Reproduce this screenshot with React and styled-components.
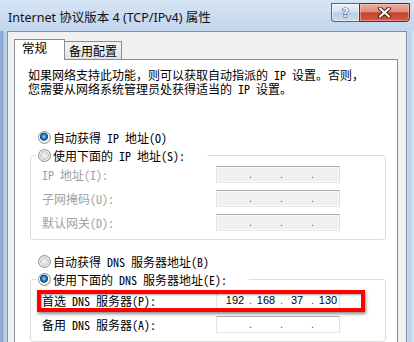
import styled, { createGlobalStyle } from "styled-components";

const GlobalStyle = createGlobalStyle`
  html, body {
    margin: 0;
    padding: 0;
  }
  body {
    background: #cfe0f3;
    overflow: hidden;
  }
`;

const Window = styled.div`
  width: 414px;
  height: 342px;
  display: flex;
  flex-direction: column;
  overflow: hidden;
  background: linear-gradient(#d6e4f4, #c1d5ed 31px, #c4d8ef);
  font-family: "Noto Sans Mono CJK SC", "Noto Sans CJK SC", monospace;
  font-size: 12px;
  color: #000;
`;

const TitleBar = styled.div`
  height: 31px;
  flex: none;
  display: flex;
  justify-content: space-between;
  align-items: flex-start;
  padding-left: 8px;
`;

const Title = styled.div`
  padding-top: 9px;
  line-height: 18px;
  font-family: "Noto Sans", "Noto Sans CJK SC", sans-serif;
  font-size: 12.5px;
  color: #111;
  white-space: nowrap;
`;

const Caption = styled.div`
  display: flex;
  margin-top: 3px;
  margin-right: 4px;
`;

const HelpButton = styled.div`
  width: 28px;
  height: 19px;
  box-sizing: border-box;
  border: 1px solid #4f6583;
  border-right: none;
  border-radius: 0 0 0 4px;
  background: linear-gradient(#eaf0f7 0%, #d6e1ef 45%, #bccde3 52%, #cbdaec 100%);
  box-shadow: inset 0 0 0 1px rgba(255, 255, 255, 0.55);
  display: flex;
  align-items: center;
  justify-content: center;
  font-family: "DejaVu Sans", sans-serif;
  font-weight: bold;
  font-size: 13px;
  color: #eef1f5;
  -webkit-text-stroke: 1px #43536a;
  paint-order: stroke fill;
`;

const CloseButton = styled.div`
  width: 51px;
  height: 19px;
  box-sizing: border-box;
  border: 1px solid #5e2a22;
  border-radius: 0 0 4px 0;
  background: linear-gradient(#eaada0 0%, #dc8d7b 45%, #c5442c 52%, #d25a40 100%);
  box-shadow: inset 0 0 0 1px rgba(255, 220, 210, 0.45);
  display: flex;
  align-items: center;
  justify-content: center;
`;

const Body = styled.div`
  flex: 1;
  display: flex;
  min-height: 0;
`;

const Frame = styled.div`
  width: 7px;
  flex: none;
  background: ${(p) =>
    p.$side === "left"
      ? "linear-gradient(90deg, #9db5da 0, #7f9bc8 2px, #b4cbe8 4px, #c4d8ef 7px)"
      : "linear-gradient(90deg, #c8dcf2 0, #b6d2f2 3px, #d6e6f8 6px, #c9ddf3 7px)"};
`;

const Client = styled.div`
  flex: 1;
  display: flex;
  flex-direction: column;
  background: #f0f0f0;
  border: 1px solid #868e99;
  border-bottom: none;
  padding: 7px 8px 0 6px;
  min-width: 0;
`;

const TabRow = styled.div`
  height: 20px;
  display: flex;
  align-items: flex-end;
  position: relative;
  z-index: 1;
`;

const Tab = styled.div`
  box-sizing: border-box;
  border: 1px solid #898c95;
  border-bottom: none;
  font-family: "Noto Sans CJK SC", sans-serif;
  font-size: 12px;
  white-space: nowrap;
  ${(p) =>
    p.$active
      ? `
    width: 51px;
    height: 21px;
    margin-bottom: -1px;
    background: #fff;
    padding-left: 7px;
    line-height: 16px;
    font-size: 12.5px;
  `
      : `
    width: 57px;
    height: 18px;
    background: linear-gradient(#f3f3f3, #e4e4e4);
    text-align: center;
    line-height: 17px;
    border-left: none;
  `}
`;

const Panel = styled.div`
  flex: 1;
  background: #fff;
  border: 1px solid #898c95;
  border-bottom: none;
  padding: 8px 0 0 13px;
`;

const Intro = styled.p`
  margin: 0;
  line-height: 14px;
  white-space: nowrap;
`;

const RadioRow = styled.div`
  height: 18px;
  display: flex;
  align-items: center;
  gap: 2px;
  margin-left: 10px;
  margin-top: ${(p) => p.$gap || 0}px;
  white-space: nowrap;
`;

const Radio = styled.span`
  width: 13px;
  height: 13px;
  flex: none;
  box-sizing: border-box;
  border-radius: 50%;
  border: 1px solid #8f9192;
  background: ${(p) =>
    p.$checked
      ? "radial-gradient(circle at 45% 42%, #b4e0ff 0, #3e8fd8 1.6px, #134f94 3.4px, #1b4f88 3.8px, #fdfdfd 4.4px, #e9e9e9 5.6px)"
      : "radial-gradient(circle at 50% 50%, #f7f7f7 0, #d9d9d9 3.6px, #c4c4c4 4px, #f4f4f4 4.6px, #dedede 5.6px)"};
`;

const Group = styled.fieldset`
  width: 356px;
  box-sizing: border-box;
  margin: 0 0 0 2px;
  padding: ${(p) => p.$top || 2}px 0 8px 11px;
  border: 1px solid #d5dfe5;
  border-radius: 3px;
  min-width: 0;
  display: flex;
  flex-direction: column;
  gap: 7px;
`;

const Legend = styled.legend`
  box-sizing: border-box;
  width: ${(p) => p.$width}px;
  height: 18px;
  margin-left: -6px;
  padding: 0 0 0 2px;
  display: flex;
  align-items: center;
  gap: 2px;
  white-space: nowrap;
`;

const FieldRow = styled.div`
  position: relative;
  display: grid;
  grid-template-columns: 174px 124px;
  height: 17px;

  /* red annotation drawn over the first DNS row */
  ${(p) =>
    p.$marked &&
    `
    &::after {
      content: "";
      position: absolute;
      left: -5px;
      top: -2px;
      width: 328px;
      height: 22px;
      box-sizing: border-box;
      border: 4px solid #ff0000;
      box-shadow: 1px 2px 3px rgba(0, 0, 0, 0.45), inset 1px 1px 2px rgba(0, 0, 0, 0.35);
      pointer-events: none;
    }
  `}
`;

const Label = styled.span`
  line-height: 17px;
  color: ${(p) => (p.$disabled ? "#a2a2a2" : "#000")};
  white-space: nowrap;
`;

const IpBox = styled.div`
  box-sizing: border-box;
  height: 17px;
  display: flex;
  padding-left: 4px;
  overflow: hidden;
  border: 1px solid;
  border-color: #abadb3 #dbdfe6 #e3e9ef #e2e3ea;
  background: ${(p) => (p.$disabled ? "#f0f0f0" : "#fff")};
  box-shadow: inset 0 0 0 1px ${(p) => (p.$disabled ? "#f9f9f9" : "#fff")};
  font-family: "Liberation Sans", sans-serif;
  font-size: 11px;
  line-height: 15px;
  color: #000;
`;

const Octet = styled.span`
  width: 28px;
  flex: none;
  text-align: center;
`;

const Dot = styled.span`
  width: 3px;
  flex: none;
  text-align: center;
  color: #555;
`;

const closeIcon = (
  <svg width="15" height="11" viewBox="0 0 15 11">
    <path d="M3 1.5 L12 9.5 M12 1.5 L3 9.5" stroke="#3a1a14" strokeWidth="4" strokeLinecap="round" />
    <path d="M3 1.5 L12 9.5 M12 1.5 L3 9.5" stroke="#fff" strokeWidth="2.2" strokeLinecap="round" />
  </svg>
);

function IpField({ parts = ["", "", "", ""], disabled }) {
  return (
    <IpBox $disabled={disabled}>
      <Octet>{parts[0]}</Octet>
      <Dot>.</Dot>
      <Octet>{parts[1]}</Octet>
      <Dot>.</Dot>
      <Octet>{parts[2]}</Octet>
      <Dot>.</Dot>
      <Octet>{parts[3]}</Octet>
    </IpBox>
  );
}

const ipRows = ["IP 地址(I):", "子网掩码(U):", "默认网关(D):"];

export default function App() {
  return (
    <>
      <GlobalStyle />
      <Window>
        <TitleBar>
          <Title>Internet 协议版本 4 (TCP/IPv4) 属性</Title>
          <Caption>
            <HelpButton>?</HelpButton>
            <CloseButton>{closeIcon}</CloseButton>
          </Caption>
        </TitleBar>
        <Body>
          <Frame $side="left" />
          <Client>
            <TabRow>
              <Tab $active>常规</Tab>
              <Tab>备用配置</Tab>
            </TabRow>
            <Panel>
              <Intro>
                如果网络支持此功能，则可以获取自动指派的 IP 设置。否则，
                <br />
                您需要从网络系统管理员处获得适当的 IP 设置。
              </Intro>

              <RadioRow $gap={32}>
                <Radio $checked />
                自动获得 IP 地址(O)
              </RadioRow>

              <Group>
                <Legend $width={171}>
                  <Radio />
                  使用下面的 IP 地址(S):
                </Legend>
                {ipRows.map((label) => (
                  <FieldRow key={label}>
                    <Label $disabled>{label}</Label>
                    <IpField disabled />
                  </FieldRow>
                ))}
              </Group>

              <RadioRow $gap={12}>
                <Radio />
                自动获得 DNS 服务器地址(B)
              </RadioRow>

              <Group $top={4}>
                <Legend $width={213}>
                  <Radio $checked />
                  使用下面的 DNS 服务器地址(E):
                </Legend>
                <FieldRow $marked>
                  <Label>首选 DNS 服务器(P):</Label>
                  <IpField parts={["192", "168", "37", "130"]} />
                </FieldRow>
                <FieldRow>
                  <Label>备用 DNS 服务器(A):</Label>
                  <IpField />
                </FieldRow>
              </Group>
            </Panel>
          </Client>
          <Frame $side="right" />
        </Body>
      </Window>
    </>
  );
}
